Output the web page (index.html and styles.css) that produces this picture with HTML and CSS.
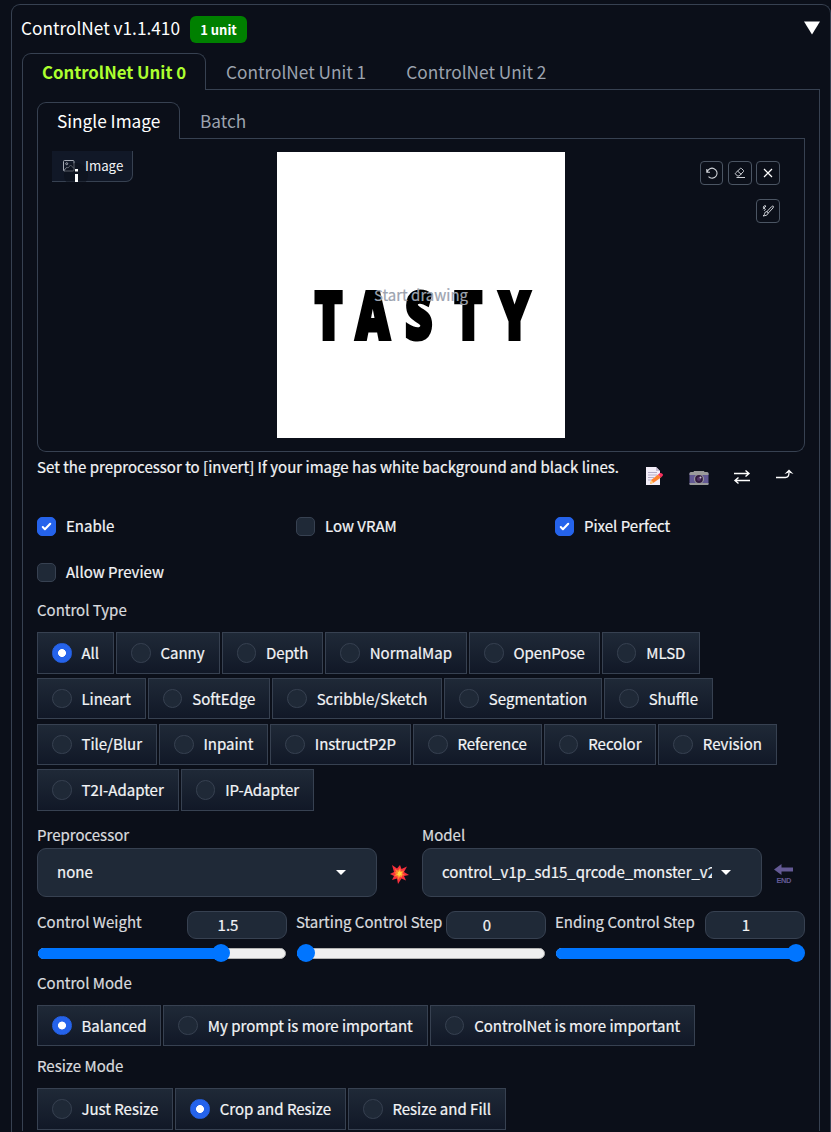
FILE: index.html
```html
<!DOCTYPE html>
<html lang="en">
<head>
<meta charset="utf-8">
<title>ControlNet</title>
<link rel="stylesheet" href="styles.css">
</head>
<body>
<main class="accordion">
  <header class="accordion-head">
    <span class="title">ControlNet v1.1.410</span><span class="badge">1 unit</span>
    <svg class="caret" width="16" height="14" viewBox="0 0 16 14"><path d="M0 0.5H16L8 13.5Z" fill="#fff"/></svg>
  </header>
  <nav class="tabs unit-tabs">
    <button class="tab active unit">ControlNet Unit 0</button>
    <button class="tab">ControlNet Unit 1</button>
    <button class="tab">ControlNet Unit 2</button>
    <span class="tab-line"></span>
  </nav>
  <section class="unit-panel">
    <nav class="tabs image-tabs">
      <button class="tab active">Single Image</button>
      <button class="tab">Batch</button>
      <span class="tab-line"></span>
    </nav>
    <div class="image-panel">
      <div class="image-label">
        <svg width="12" height="12" viewBox="0 0 12 12" fill="none" stroke="#a4a9b3"><rect x=".5" y=".5" width="10.5" height="10.5" rx="1"/><circle cx="3.7" cy="3.7" r="1"/><path d="M1 10.5 4 7.2 5 8 7.6 5 11 8.5"/></svg>
        <i class="cursor"><svg width="24" height="24" viewBox="0 0 24 24"><circle cx="12" cy="12" r="12" fill="#0b0f19" opacity=".5"/><path d="M11 6h3v2.5h-3zM11 11h3v8h-3z" fill="#fff"/></svg></i>
        <span class="image-text">Image</span>
      </div>
      <div class="canvas">
        <svg class="word" width="288" height="286" viewBox="0 0 288 286">
          <g transform="scale(.72 1)"><text y="187.5" x="52.500 109.500 178 246.500 308.500">TASTY</text></g>
        </svg>
        <span class="hint">Start drawing</span>
      </div>
      <div class="tools">
        <button class="tool first"><svg width="14" height="14" viewBox="0 0 14 14" fill="none" stroke="#cfd2d8" stroke-width="1.1"><path d="M1.8 3v3.2H5M2.2 6A5 5 0 1 1 3.5 10.7"/></svg></button>
        <button class="tool"><svg width="14" height="14" viewBox="0 0 14 14" fill="none" stroke="#cfd2d8"><path d="M4.500 10 2.500 8Q2 7.400 2.500 7L7.500 2.300Q8 2 8.500 2.500L10.500 4.500Q11 5 10.500 5.500L6.200 10ZM4.700 5.200l3.600 3.200M3.500 11.500H12"/></svg></button>
        <button class="tool"><svg width="14" height="14" viewBox="0 0 14 14" fill="none" stroke="#fff" stroke-width="1.2"><path d="M3 3 11 11M11 3 3 11"/></svg></button>
        <button class="tool last"><svg width="14" height="14" viewBox="0 0 14 14" fill="none" stroke="#cfd2d8"><path d="M6 7.5 10.5 2.7Q12 1.6 12.3 2.2T12 4L7.5 8.8ZM6 7.6 7.4 9Q6.5 12 2 12 3.7 10.8 3.8 9.2T6 7.6M2 5.2 5 2 3.3 1.8 2.2 3.2 4.4 5.2 3.2 6.8"/></svg></button>
      </div>
    </div>
    <div class="help-row">
      <p>Set the preprocessor to [invert] If your image has white background and black lines.</p>
      <div class="actions">
        <svg width="19" height="20" viewBox="0 0 19 20"><path d="M1 1h10l4 4v14H1z" fill="#f3eef8"/><path d="M11 1v4h4z" fill="#c9bed6"/><path d="M3 6.5h9M3 9h9M3 11.5h6M3 14h5" stroke="#b4acc8"/><path d="m5 18 1.3-4L13 8.5l3 3-7.5 5.3z" fill="#ff822d"/><path d="m5 18 1.3-4 2.2 2.8z" fill="#ffce7c"/><path d="m13 8.5 2-1.5q2-.5 3 1.5.5 1-2 3z" fill="#f8315f"/></svg>
        <svg width="20" height="20" viewBox="0 0 20 20"><path d="M2 6h2v1H2zM5 5h10l1 2H4z" fill="#9b9b9b"/><rect x=".5" y="6.5" width="19" height="12.5" rx="1" fill="#635994"/><path d="M.5 7.5q0-1.500 1.500-1.500h16q1.500 0 1.500 1.500v1.500H.5zM.5 17h19v1q0 1-1 1h-17q-1 0-1-1z" fill="#9b9b9b"/><circle cx="10" cy="13" r="5" fill="#9b9b9b"/><circle cx="10" cy="13" r="3.9" fill="#321b41"/><circle cx="10" cy="13" r="2" fill="#533566"/><circle cx="11.500" cy="11.500" r="1" fill="#cdc4d6"/></svg>
        <svg width="18" height="20" viewBox="0 0 18 20" fill="none" stroke="#fff" stroke-width="1.400"><path d="M1 7.500h15M12.500 4.500l3.500 3-3.500 3M17 14.500H2M5.500 11.500 2 14.500l3.500 3"/></svg>
        <svg width="18" height="20" viewBox="0 0 18 20"><path d="M0 11.500h9.500q3.500 0 3.500-5" fill="none" stroke="#fff" stroke-width="1.300"/><path d="M13 3.500 17.500 8 13 6.500 8.500 8z" fill="#fff"/></svg>
      </div>
    </div>
    <div class="checks">
      <label><b class="box on"><svg width="17" height="17" viewBox="0 0 16 16"><path d="M12.207 4.793a1 1 0 0 1 0 1.414l-5 5a1 1 0 0 1-1.414 0l-2-2a1 1 0 0 1 1.414-1.414L6.500 9.086l4.293-4.293a1 1 0 0 1 1.414 0z" fill="#fff"/></svg></b>Enable</label>
      <label><b class="box"></b>Low VRAM</label>
      <label><b class="box on"><svg width="17" height="17" viewBox="0 0 16 16"><path d="M12.207 4.793a1 1 0 0 1 0 1.414l-5 5a1 1 0 0 1-1.414 0l-2-2a1 1 0 0 1 1.414-1.414L6.500 9.086l4.293-4.293a1 1 0 0 1 1.414 0z" fill="#fff"/></svg></b>Pixel Perfect</label>
      <label><b class="box"></b>Allow Preview</label>
    </div>
    <h3 class="type-title">Control Type</h3>
    <div class="chips types">
      <label class="chip"><i class="radio on"></i>All</label><label class="chip"><i class="radio"></i>Canny</label><label class="chip"><i class="radio"></i>Depth</label><label class="chip"><i class="radio"></i>NormalMap</label><label class="chip"><i class="radio"></i>OpenPose</label><label class="chip"><i class="radio"></i>MLSD</label>
      <label class="chip"><i class="radio"></i>Lineart</label><label class="chip"><i class="radio"></i>SoftEdge</label><label class="chip"><i class="radio"></i>Scribble/Sketch</label><label class="chip"><i class="radio"></i>Segmentation</label><label class="chip"><i class="radio"></i>Shuffle</label>
      <label class="chip"><i class="radio"></i>Tile/Blur</label><label class="chip"><i class="radio"></i>Inpaint</label><label class="chip"><i class="radio"></i>InstructP2P</label><label class="chip"><i class="radio"></i>Reference</label><label class="chip"><i class="radio"></i>Recolor</label><label class="chip"><i class="radio"></i>Revision</label>
      <label class="chip"><i class="radio"></i>T2I-Adapter</label><label class="chip"><i class="radio"></i>IP-Adapter</label>
    </div>
    <div class="selects">
      <div class="field"><h3>Preprocessor</h3><div class="select"><span>none</span><svg width="10" height="5" viewBox="0 0 10 5"><path d="M0 0h10L5 5z" fill="#fff"/></svg></div></div>
      <svg class="emoji" width="19" height="20" viewBox="0 0 19 20"><path d="m2 1 5 3.500L10 1l1.500 4L17 2.500 14 8l5 3-5 1 2 4.500-4.500-2L8 20l-1-5.500-5 1.500 2-4L0 10l4-2z" fill="#f92f3c"/><path d="m5 5 3 1.500L10 4l1 3 3-.5-1.500 3L15 11l-3 .5v2L10 13l-2 3-.5-3.500L4 12l2-2-2-1.500 2-.5z" fill="#ff822d"/><path d="m9.500 6 .8 2 2 .2-1 1.800 1 1.500-2.200-.3L9 13l-.8-2L6 10.500 8 9.500 7.500 7.500l1.500.5z" fill="#fcd53f"/></svg>
      <div class="field"><h3>Model</h3><div class="select model"><span>control_v1p_sd15_qrcode_monster_v2</span><svg width="10" height="5" viewBox="0 0 10 5"><path d="M0 0h10L5 5z" fill="#fff"/></svg></div></div>
      <svg class="emoji end-icon" width="20" height="20" viewBox="0 0 20 20"><path d="M0 5.500 7.500 0v3.500H19v4H7.500V11z" fill="#635994"/><text x="2.500" y="19.300" textLength="15" class="end">END</text></svg>
    </div>
    <div class="sliders">
      <div class="slider"><div class="slider-head"><h3>Control Weight</h3><span class="num">1.5</span></div><div class="track"><i class="fill" style="width:74.400%"></i><i class="thumb"></i></div></div>
      <div class="slider"><div class="slider-head"><h3>Starting Control Step</h3><span class="num">0</span></div><div class="track"><i class="fill" style="width:3.600%"></i><i class="thumb"></i></div></div>
      <div class="slider"><div class="slider-head"><h3>Ending Control Step</h3><span class="num">1</span></div><div class="track"><i class="fill" style="width:97.600%"></i><i class="thumb"></i></div></div>
    </div>
    <h3 class="mode-title">Control Mode</h3>
    <div class="chips">
      <label class="chip"><i class="radio on"></i>Balanced</label><label class="chip"><i class="radio"></i>My prompt is more important</label><label class="chip"><i class="radio"></i>ControlNet is more important</label>
    </div>
    <h3 class="mode-title resize">Resize Mode</h3>
    <div class="chips">
      <label class="chip"><i class="radio"></i>Just Resize</label><label class="chip"><i class="radio on"></i>Crop and Resize</label><label class="chip"><i class="radio"></i>Resize and Fill</label>
    </div>
  </section>
</main>
</body>
</html>
```
FILE: styles.css
```css
* { box-sizing: border-box; }
body { margin: 0; height: 1132px; overflow: hidden; background: #0b0f19; color: #f3f4f6; font: 15px/20px "Noto Sans CJK SC", sans-serif; -webkit-text-stroke: .22px; }
button { background: none; border: 0; padding: 0; font: inherit; color: inherit; }
h3, p { margin: 0; font-size: 15px; font-weight: 400; line-height: 20px; }
h3 { color: #d9dbdf; white-space: nowrap; }
i, b { font-style: normal; font-weight: 400; }
svg { display: block; flex: none; }
.accordion { margin: 4px 0 0 11px; width: 820px; height: 1128px; border: 1px solid #374151; border-bottom: 0; border-radius: 9px 9px 0 0; padding: 0 10px; }
.accordion-head { height: 48px; display: flex; align-items: center; }
.title { margin: -3px 0 0 -1px; font-size: 17.250px; color: #fff; white-space: nowrap; -webkit-text-stroke: 0; }
.badge { margin: 1px 0 0 10px; width: 57px; height: 27px; border-radius: 6px; background: #008000; color: #fff; font-size: 13px; font-weight: 700; line-height: 27px; text-align: center; -webkit-text-stroke: 0; }
.caret { margin: -2px 0 0 auto; }
.tabs { display: flex; height: 37px; }
.tab { padding: 0 20px 0 20px; border-bottom: 1px solid #374151; color: #9ca3af; font-size: 17.250px; height: 37px; white-space: nowrap; -webkit-text-stroke: 0; }
.tab.active { border: 1px solid #374151; border-bottom: 0; border-radius: 9px 9px 0 0; padding: 0 0 0 19px; width: 143px; text-align: left; color: #fff; }
.tab.unit { width: 184px; color: #adff2f; font-size: 16.750px; font-weight: 700; }
.tab:not(.active) { padding-top: 2px; }
.tab-line { flex: 1; border-bottom: 1px solid #374151; }
.unit-panel { height: 1041px; border: 1px solid #374151; border-width: 0 1px; padding: 12px 14px 0; }
.image-panel { position: relative; height: 313px; border: 1px solid #374151; border-top: 0; border-radius: 0 0 9px 9px; padding: 13px 14px; display: grid; grid-template-columns: 225px 288px 1fr; align-items: start; }
.image-label { position: relative; width: 81px; height: 31px; margin-top: -1px; border: 1px solid #374151; border-width: 0 1px 1px 0; border-radius: 0 0 7px 0; background: #111827; display: flex; align-items: center; padding-left: 11px; gap: 10px; font-size: 13.250px; -webkit-text-stroke: 0; }
.image-text { z-index: 1; }
.cursor { position: absolute; left: 12px; top: 12px; }
.canvas { position: relative; height: 286px; background: #fff; }
.word text { font: 800 65px "Open Sans", sans-serif; fill: #000; stroke: #000; stroke-width: 4px; }
.hint { position: absolute; left: 0; right: 0; top: 133px; text-align: center; color: #9ca3af; }
.tools { display: grid; grid-template-columns: repeat(3, 24px); gap: 14px 4px; justify-content: end; padding: 9px 10px 0 0; }
.tool { width: 24px; height: 24px; border: 1px solid #4b5563; border-radius: 4px; display: grid; place-items: center; }
.tool.first { width: 23px; }
.tool.last { grid-column: 3; }
.help-row { height: 54px; display: flex; padding-top: 5px; justify-content: space-between; white-space: nowrap; }
.help-row p { letter-spacing: .02px; }
.actions { display: flex; gap: 24.700px; padding: 9px 11px 0 0; }
.checks { margin-top: 10px; display: grid; grid-template-columns: 259px 259px 1fr; grid-auto-rows: 20px; row-gap: 26px; }
.checks label { display: flex; align-items: center; gap: 10px; white-space: nowrap; }
.box { width: 19px; height: 19px; border: 1px solid #374151; border-radius: 5px; background: #1f2937; }
.box.on { background: #2563eb; border-color: #2563eb; }
.type-title { margin-top: 18px; }
.chips { display: flex; flex-wrap: wrap; gap: 4.300px 2px; }
.types { margin-top: 12px; }
.chip { height: 41.500px; padding: 0 14px; border: 1px solid #374151; background: linear-gradient(#1f2937, #111827); display: flex; align-items: center; gap: 9.900px; white-space: nowrap; }
.radio { width: 19.500px; height: 19.500px; border: 1px solid #374151; border-radius: 50%; background: #1f2937; flex: none; }
.radio.on { border-color: #2563eb; background: radial-gradient(circle, #fff 3.600px, #2563eb 4.300px); }
.selects { display: grid; grid-template-columns: 340px 45px 340px 1fr; margin-top: 14px; }
.select { margin-top: 3px; height: 49px; border: 1px solid #374151; border-radius: 9px; background: #1f2937; display: flex; align-items: center; justify-content: space-between; padding: 0 30px 0 19px; }
.select span { width: 270px; overflow: hidden; white-space: nowrap; }
.emoji { margin: 39px 0 0 13px; }
.end-icon { margin-left: 12px; }
.end { font: 700 7.500px "Liberation Sans", sans-serif; fill: #635994; }
.sliders { display: grid; grid-template-columns: repeat(3, 250px); gap: 9px; margin-top: 14px; }
.slider-head { display: flex; justify-content: space-between; height: 28px; }
.slider-head h3 { margin-top: 1px; }
.num { width: 100px; height: 28px; flex: none; border: 1px solid #374151; border-radius: 9px; background: #1f2937; line-height: 26px; text-align: center; padding-right: 18px; }
.track { display: flex; align-items: center; height: 11px; margin: 9px 1px 0; border: 1px solid #b2b2b2; border-radius: 6px; background: #efefef; }
.fill { height: 11px; margin-left: -1px; border-radius: 6px 0 0 6px; background: #0075ff; flex: none; }
.thumb { width: 18px; height: 18px; margin-left: -9px; border-radius: 50%; background: #0075ff; flex: none; }
.mode-title { margin: 14px 0 12px; }
.resize { margin: 10px 0 12px; }
```
